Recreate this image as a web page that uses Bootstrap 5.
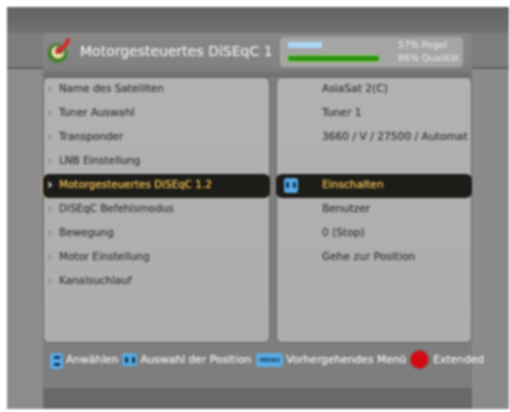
<!DOCTYPE html>
<html lang="de">
<head>
<meta charset="utf-8">
<title>Motorgesteuertes DiSEqC 1.2</title>
<link href="https://cdn.jsdelivr.net/npm/bootstrap@5.3.0/dist/css/bootstrap.min.css" rel="stylesheet">
<style>
html,body{margin:0;background:#fff;overflow:hidden}
body{padding:7px 1px 3px 7px;font-family:"DejaVu Sans",sans-serif;}
.tv{height:402px;background:#868686;filter:blur(.85px)}
.band-top{height:26px;background:linear-gradient(#656565,#6a6a6a 60%,#737373)}
.side{width:36px}
.side-l{background:linear-gradient(#7d7d7d 0,#7d7d7d 34px,#5f5f5f 34px,#5f5f5f 36px,transparent 36px),repeating-linear-gradient(#8e8e8e 0,#8e8e8e 2px,#8a8a8a 2px,#8a8a8a 4px)}
.side-r{width:37px;background:linear-gradient(#7d7d7d 0,#7d7d7d 34px,#5f5f5f 34px,#5f5f5f 36px,transparent 36px),repeating-linear-gradient(#8c8c8c 0,#8c8c8c 2px,#888 2px,#888 4px)}
.center{width:429px;background:#7e7e7e}
.head{height:44px;padding:3px 0 0 3px;border-radius:5px 5px 0 0;background:linear-gradient(#888,#818181 80%,#6c6c6c)}
.ttl{color:#e2e2e2;font-size:14px;line-height:1;margin-left:8px;white-space:nowrap;width:200px;text-shadow:0 0 1px #e2e2e2}
.meter{width:183px;height:30px;margin-top:1px;background:#a5a5a5;border-radius:4px;padding:3px 0 0 8px;position:relative;flex:none}
.m-blue{width:34px;height:6px;background:#a9d6f3;margin-top:2px}
.m-green{width:91px;height:5px;background:#2d930e;box-shadow:0 0 2px 1px #7fd055;margin-top:8px;border-radius:2px}
.m-lbl{position:absolute;left:118px;top:1px;color:#ececec;font-size:9.4px;line-height:13px;white-space:nowrap}
.panes{height:266px;gap:6px}
.pane{background:linear-gradient(#b2b2b2,#adadad);border:1px solid #666;border-radius:6px}
.pane-l{width:228px}
.pane-r{width:197px}
.rw{height:24px;font-size:10.4px;color:#454545;white-space:nowrap;overflow:hidden;text-shadow:0 0 1px #555;padding-bottom:2px}
.pane-r .rw{font-size:10.7px}
.pane-l .rw{padding-left:3px}
.pane-r .rw{padding-left:45px}
.pane .rw-on{background:#1c1c18;color:#e6b550;margin:0 -1px;border-radius:6px;text-shadow:0 0 1px #e6b550}
.pane-l .rw-on{padding-left:4px;box-shadow:-2px 0 2px -1px #d6b662}
.pane-r .rw-on{padding-left:8px}
.chev{width:12px;color:#8a8a8a;font-size:14px;line-height:1;flex:none;font-weight:700;margin-top:-2px;text-shadow:none}
.rw-on .chev{color:#eee}
.lr{width:14px;height:15px;background:#5aa9e6;border-radius:3px;margin-right:24px;flex:none}
.pad{width:3px;height:6px;background:#0e3558;display:block;border-radius:1px}
.foot{height:45px;padding:10px 0 0 7px;color:#e6e6e6;font-size:10.7px;line-height:13px;white-space:nowrap;text-shadow:0 0 1px #e6e6e6;position:relative;z-index:1}
.key{background:#58a9e2;border-radius:3px;flex:none;margin-right:3px}
.k1{width:13px;height:16px}
.pad-h{width:6px;height:3px}
.k2{width:15px;height:13px;margin-left:4px}
.k3{width:27px;height:14px;margin-left:5px;color:#123c60;font-size:6px;font-weight:700;text-align:center;line-height:14px;text-shadow:none}
.red{width:17px;height:17px;background:#d40a12;border-radius:50%;margin:-2px 5px 0 5px;flex:none;box-shadow:0 0 1px 1px #9b3b3b}
.band-bot{height:21px;background:#696969}
</style>
</head>
<body>
<div class="tv d-flex flex-column">
  <div class="band-top"></div>
  <div class="d-flex flex-grow-1">
    <div class="side side-l"></div>
    <div class="center d-flex flex-column">
      <div class="head d-flex align-items-start">
        <svg width="26" height="28" viewBox="0 0 26 28"><circle cx="11.5" cy="17" r="10" fill="#44802c"/><circle cx="12" cy="16" r="6.5" fill="#e8e2a8"/><circle cx="14" cy="13.5" r="4.5" fill="#7a7a6a"/><path d="M9 15 18 8 21 2 25 3 22 9 14 17 10 18Z" fill="#d6282c"/></svg>
        <div class="ttl mt-2">Motorgesteuertes DiSEqC 1</div>
        <div class="meter">
          <div class="m-blue"></div>
          <div class="m-green"></div>
          <div class="m-lbl">57% Pegel<br>86% Qualität</div>
        </div>
      </div>
      <div class="panes d-flex">
        <div class="pane pane-l">
          <div class="rw d-flex align-items-center"><span class="chev">›</span>Name des Satelliten</div>
          <div class="rw d-flex align-items-center"><span class="chev">›</span>Tuner Auswahl</div>
          <div class="rw d-flex align-items-center"><span class="chev">›</span>Transponder</div>
          <div class="rw d-flex align-items-center"><span class="chev">›</span>LNB Einstellung</div>
          <div class="rw rw-on d-flex align-items-center"><span class="chev">›</span>Motorgesteuertes DiSEqC 1.2</div>
          <div class="rw d-flex align-items-center"><span class="chev">›</span>DiSEqC Befehlsmodus</div>
          <div class="rw d-flex align-items-center"><span class="chev">›</span>Bewegung</div>
          <div class="rw d-flex align-items-center"><span class="chev">›</span>Motor Einstellung</div>
          <div class="rw d-flex align-items-center"><span class="chev">›</span>Kanalsuchlauf</div>
        </div>
        <div class="pane pane-r">
          <div class="rw d-flex align-items-center">AsiaSat 2(C)</div>
          <div class="rw d-flex align-items-center">Tuner 1</div>
          <div class="rw d-flex align-items-center">3660 / V / 27500 / Automat</div>
          <div class="rw d-flex align-items-center"></div>
          <div class="rw rw-on d-flex align-items-center"><span class="lr d-flex align-items-center justify-content-center gap-1"><i class="pad"></i><i class="pad"></i></span>Einschalten</div>
          <div class="rw d-flex align-items-center">Benutzer</div>
          <div class="rw d-flex align-items-center">0 (Stop)</div>
          <div class="rw d-flex align-items-center">Gehe zur Position</div>
        </div>
      </div>
      <div class="foot d-flex align-items-start">
        <span class="key k1 d-flex flex-column align-items-center justify-content-center gap-1"><i class="pad pad-h"></i><i class="pad pad-h"></i></span>
        <span>Anwählen</span>
        <span class="key k2 d-flex align-items-center justify-content-center gap-1"><i class="pad"></i><i class="pad"></i></span>
        <span>Auswahl der Position</span>
        <span class="key k3">MENU</span>
        <span>Vorhergehendes Menü</span>
        <span class="red"></span>
        <span>Extended</span>
      </div>
      <div class="band-bot"></div>
    </div>
    <div class="side side-r"></div>
  </div>
</div>
</body>
</html>
